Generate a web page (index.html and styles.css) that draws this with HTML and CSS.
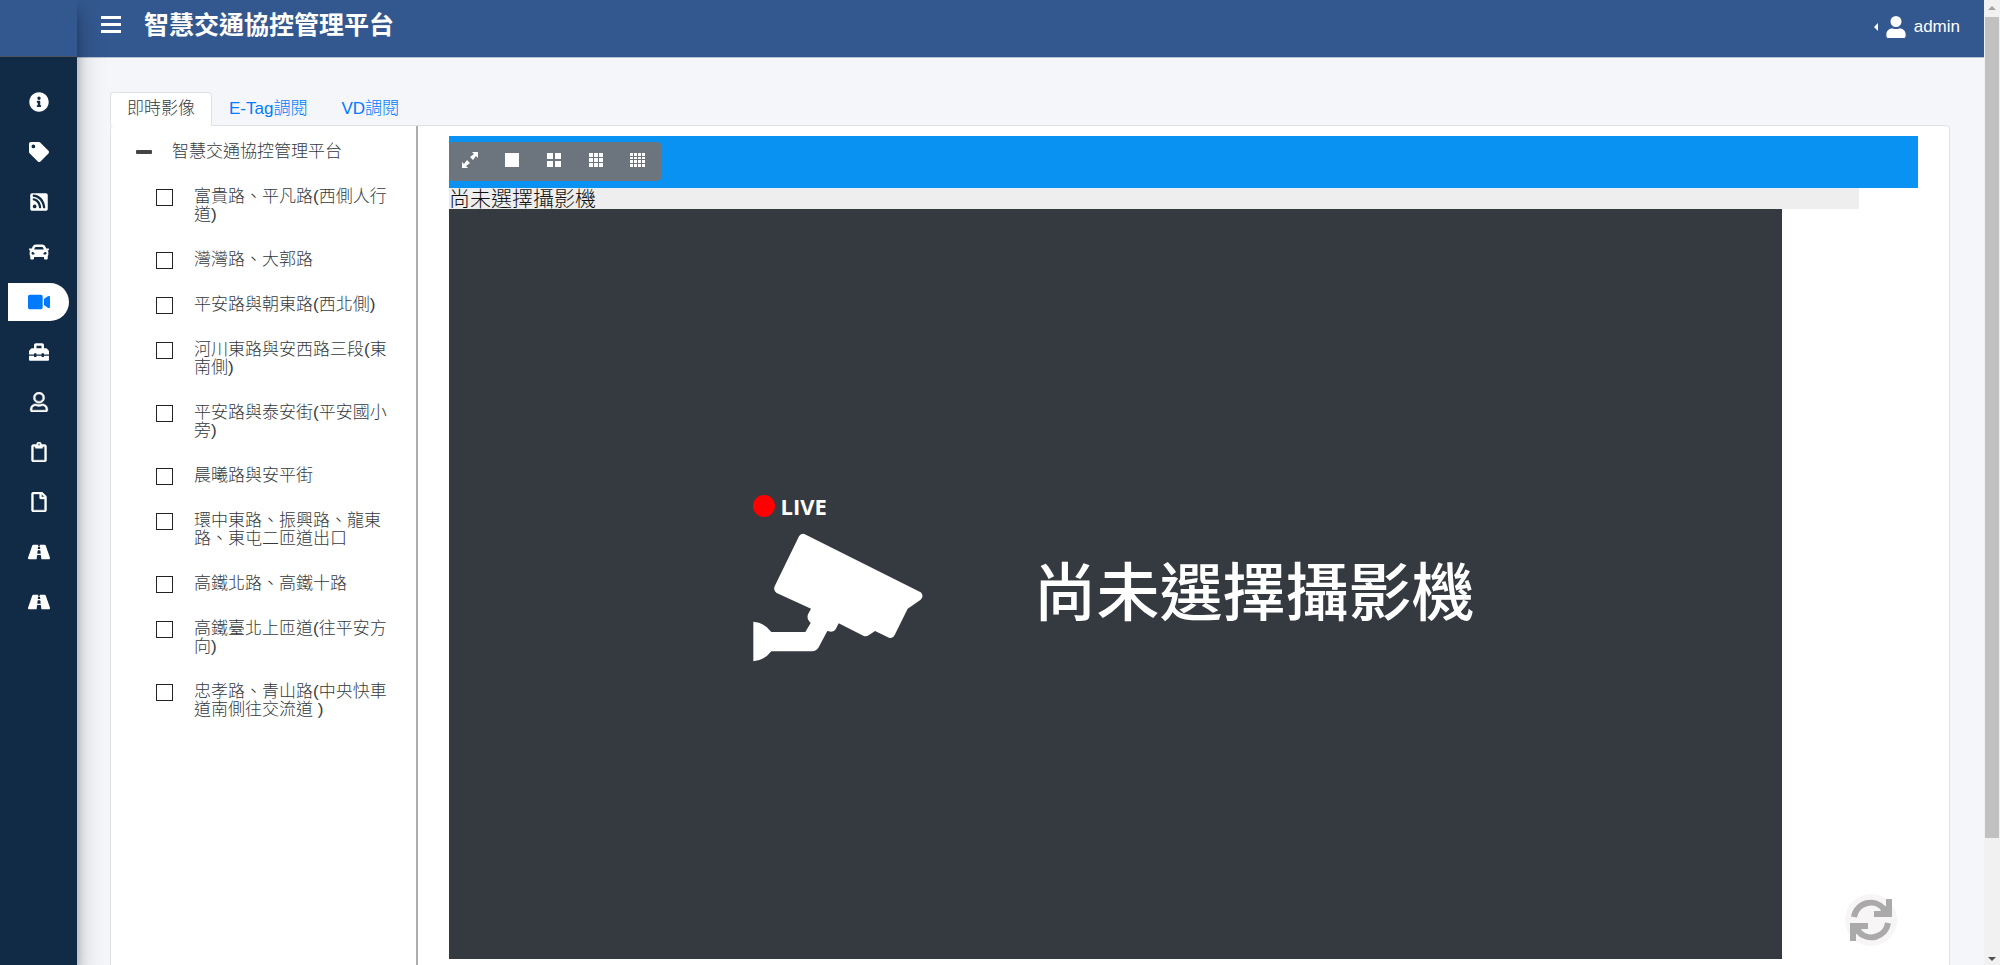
FILE: index.html
```html
<!DOCTYPE html>
<html lang="zh-Hant">

<head>
    <meta charset="UTF-8">
    <meta name="viewport" content="width=device-width, initial-scale=1">
    <title>智慧交通協控管理平台</title>
    <link rel="stylesheet" href="styles.css">
</head>

<body>

    <aside class="sidebar">
        <div class="brand"></div>
        <nav class="side-nav">
            <a href="#" aria-label="資訊"><svg class="icon" viewBox="0 0 512 512"><path d="M256 8C119 8 8 119 8 256s111 248 248 248 248-111 248-248S393 8 256 8zm0 110c23 0 42 19 42 42s-19 42-42 42-42-19-42-42 19-42 42-42zm56 254c0 7-5 12-12 12h-88c-7 0-12-5-12-12v-24c0-7 5-12 12-12h12v-64h-12c-7 0-12-5-12-12v-24c0-7 5-12 12-12h64c7 0 12 5 12 12v100h12c7 0 12 5 12 12v24z"/></svg></a>
            <a href="#" aria-label="E-Tag"><svg class="icon" viewBox="0 0 512 512"><path d="M0 252V48C0 21 21 0 48 0h204a48 48 0 0 1 34 14l212 212c19 19 19 49 0 68L294 498c-19 19-49 19-68 0L14 286a48 48 0 0 1-14-34zM112 64a48 48 0 1 0 0 96 48 48 0 0 0 0-96z"/></svg></a>
            <a href="#" aria-label="訊號"><svg class="icon" viewBox="-32 0 512 512"><path d="M400 32H48C21 32 0 53 0 80v352c0 27 21 48 48 48h352c27 0 48-21 48-48V80c0-27-21-48-48-48zM112 416a48 48 0 1 1 0-96 48 48 0 0 1 0 96zm157 0h-34a11 11 0 0 1-11-11C218 300 135 218 75 214a11 11 0 0 1-11-11v-34c0-7 6-12 12-11 110 6 198 95 204 246 1 6-4 12-11 12zm103 0h-34a11 11 0 0 1-11-11C321 248 200 122 75 120a11 11 0 0 1-11-11V76c0-7 5-12 12-12 167 6 302 141 308 340 0 7-5 12-12 12z"/></svg></a>
            <a href="#" aria-label="車輛"><svg class="icon" viewBox="0 0 512 512"><path d="M500 168h-58l-24-50c-14-33-46-54-82-54H176c-36 0-68 21-82 54l-24 50H12c-8 0-14 7-12 15l6 24c1 5 6 9 12 9h20c-14 12-22 29-22 48v48c0 16 6 31 16 42v62c0 18 14 32 32 32h32c18 0 32-14 32-32v-32h256v32c0 18 14 32 32 32h32c18 0 32-14 32-32v-62c10-11 16-26 16-42v-48c0-19-8-36-22-48h20c6 0 11-4 12-9l6-24c2-8-4-15-12-15zm-347-26c4-9 13-14 23-14h160c10 0 19 5 23 14l21 50H132zM96 320c-19 0-32-13-32-32s13-32 32-32 48 29 48 48-29 16-48 16zm320 0c-19 0-48 3-48-16s29-48 48-48 32 13 32 32-13 32-32 32z"/></svg></a>
            <a href="#" class="active" aria-label="即時影像"><svg class="icon wide" viewBox="0 0 576 512"><path d="M336 64H48C21 64 0 85 0 112v288c0 27 21 48 48 48h288c27 0 48-21 48-48V112c0-27-21-48-48-48zm190 38L416 177v158l110 75c21 15 50 0 50-25V127c0-25-29-40-50-25z"/></svg></a>
            <a href="#" aria-label="工具"><svg class="icon" viewBox="0 0 512 512"><path d="M503 215l-46-46a32 32 0 0 0-23-9h-50V80c0-26-22-48-48-48H176c-26 0-48 22-48 48v80H78a32 32 0 0 0-23 9L9 215a32 32 0 0 0-9 22v83h128v-16c0-9 7-16 16-16h32c9 0 16 7 16 16v16h128v-16c0-9 7-16 16-16h32c9 0 16 7 16 16v16h128v-83a32 32 0 0 0-9-22zM320 160H192V96h128zm64 208c0 9-7 16-16 16h-32c-9 0-16-7-16-16v-16H192v16c0 9-7 16-16 16h-32c-9 0-16-7-16-16v-16H0v96c0 18 14 32 32 32h448c18 0 32-14 32-32v-96H384z"/></svg></a>
            <a href="#" aria-label="使用者"><svg class="icon outline" viewBox="-32 0 512 512"><path d="M314 304c-29 0-43 16-90 16s-61-16-90-16C60 304 0 364 0 438v26c0 27 21 48 48 48h352c27 0 48-21 48-48v-26c0-74-60-134-134-134zm86 160H48v-26c0-48 38-86 86-86 15 0 39 16 90 16 52 0 75-16 90-16 48 0 86 38 86 86zM224 288a144 144 0 1 0 0-288 144 144 0 0 0 0 288zm0-240a96 96 0 1 1 0 192 96 96 0 0 1 0-192z"/></svg></a>
            <a href="#" aria-label="紀錄"><svg class="icon outline" viewBox="-64 0 512 512"><path d="M336 64h-80a64 64 0 0 0-128 0H48C21 64 0 85 0 112v352c0 27 21 48 48 48h288c27 0 48-21 48-48V112c0-27-21-48-48-48zM192 40a24 24 0 1 1 0 48 24 24 0 0 1 0-48zm144 424H48V112h48v36c0 7 5 12 12 12h168c7 0 12-5 12-12v-36h48z"/></svg></a>
            <a href="#" aria-label="文件"><svg class="icon outline" viewBox="-64 0 512 512"><path d="M370 98L286 14a48 48 0 0 0-34-14H48C21 0 0 22 0 48v416c0 27 21 48 48 48h288c27 0 48-21 48-48V132a48 48 0 0 0-14-34zm-38 30h-76V52zM48 464V48h160v104c0 13 11 24 24 24h104v288z"/></svg></a>
            <a href="#" aria-label="道路"><svg class="icon wide" viewBox="0 0 576 512"><path d="M573 402L464 85c-5-12-17-21-30-21H308l4 34c1 8-4 14-10 14h-28c-6 0-11-6-10-14l4-34H142c-13 0-25 9-30 21L3 402c-10 22 5 46 28 46h194l11-98c1-8 8-14 16-14h72c8 0 15 6 16 14l11 98h194c23 0 38-24 28-46zM260 136c0-4 4-8 8-8h40c4 0 8 4 9 8l4 32c1 5-3 8-8 8h-50c-5 0-9-4-8-8zm56 168h-56c-10 0-17-8-16-17l7-64c1-8 8-15 16-15h42c8 0 15 7 16 15l7 64c1 9-7 17-16 17z"/></svg></a>
            <a href="#" aria-label="路段"><svg class="icon wide" viewBox="0 0 576 512"><path d="M573 402L464 85c-5-12-17-21-30-21H308l4 34c1 8-4 14-10 14h-28c-6 0-11-6-10-14l4-34H142c-13 0-25 9-30 21L3 402c-10 22 5 46 28 46h194l11-98c1-8 8-14 16-14h72c8 0 15 6 16 14l11 98h194c23 0 38-24 28-46zM260 136c0-4 4-8 8-8h40c4 0 8 4 9 8l4 32c1 5-3 8-8 8h-50c-5 0-9-4-8-8zm56 168h-56c-10 0-17-8-16-17l7-64c1-8 8-15 16-15h42c8 0 15 7 16 15l7 64c1 9-7 17-16 17z"/></svg></a>
        </nav>
    </aside>

    <div class="page">
        <header class="topbar">
            <button class="menu" aria-label="選單"><svg viewBox="0 0 20 18"><path d="M0 0h20v3H0zM0 7h20v3H0zM0 14h20v3H0z"/></svg></button>
            <h1>智慧交通協控管理平台</h1>
            <a href="#" class="user">
                <svg class="caret" viewBox="0 0 4 8"><path d="M4 0v8L0 4z"/></svg>
                <svg class="person" viewBox="0 0 448 512"><path d="M224 256a128 128 0 1 0 0-256 128 128 0 0 0 0 256zm90 32h-17a174 174 0 0 1-146 0h-17C60 288 0 348 0 422v42c0 27 21 48 48 48h352c27 0 48-21 48-48v-42c0-74-60-134-134-134z"/></svg>
                admin
            </a>
        </header>

        <main>
            <nav class="tabs">
                <a href="#" class="tab selected">即時影像</a>
                <a href="#" class="tab">E-Tag調閱</a>
                <a href="#" class="tab">VD調閱</a>
            </nav>

            <section class="card">
                <div class="tree">
                    <div class="tree-root">
                        <button class="collapse" aria-label="收合"></button>
                        <span>智慧交通協控管理平台</span>
                    </div>
                    <label class="camera"><input type="checkbox"><span>富貴路、平凡路(西側人行道)</span></label>
                    <label class="camera"><input type="checkbox"><span>灣灣路、大郭路</span></label>
                    <label class="camera"><input type="checkbox"><span>平安路與朝東路(西北側)</span></label>
                    <label class="camera"><input type="checkbox"><span>河川東路與安西路三段(東南側)</span></label>
                    <label class="camera"><input type="checkbox"><span>平安路與泰安街(平安國小旁)</span></label>
                    <label class="camera"><input type="checkbox"><span>晨曦路與安平街</span></label>
                    <label class="camera"><input type="checkbox"><span>環中東路、振興路、龍東路、東屯二匝道出口</span></label>
                    <label class="camera"><input type="checkbox"><span>高鐵北路、高鐵十路</span></label>
                    <label class="camera"><input type="checkbox"><span>高鐵臺北上匝道(往平安方向)</span></label>
                    <label class="camera"><input type="checkbox"><span>忠孝路、青山路(中央快車道南側往交流道 )</span></label>
                </div>

                <div class="viewer">
                    <div class="toolbar">
                        <div class="layouts">
                            <button aria-label="全螢幕"><svg viewBox="0 0 16 16"><path d="M10 0h6v6l-2-2-3 4-3-3 4-3zM0 10l2 2 3-4 3 3-4 3 2 2H0z"/></svg></button>
                            <button aria-label="單一畫面"><svg viewBox="0 0 16 16"><path d="M1 1h14v14H1z"/></svg></button>
                            <button aria-label="四分割"><svg viewBox="0 0 16 16"><path d="M1 1h6v6H1zM9 1h6v6H9zM1 9h6v6H1zM9 9h6v6H9z"/></svg></button>
                            <button aria-label="九分割"><svg viewBox="0 0 16 16"><path d="M1 1h4v4H1zM6 1h4v4H6zM11 1h4v4h-4zM1 6h4v4H1zM6 6h4v4H6zM11 6h4v4h-4zM1 11h4v4H1zM6 11h4v4H6zM11 11h4v4h-4z"/></svg></button>
                            <button aria-label="十六分割"><svg viewBox="0 0 16 16"><path d="M0 1h3v3H0zM4 1h3v3H4zM8 1h3v3H8zM12 1h3v3h-3zM0 5h3v2H0zM4 5h3v2H4zM8 5h3v2H8zM12 5h3v2h-3zM0 8h3v3H0zM4 8h3v3H4zM8 8h3v3H8zM12 8h3v3h-3zM0 12h3v3H0zM4 12h3v3H4zM8 12h3v3H8zM12 12h3v3h-3z"/></svg></button>
                        </div>
                    </div>
                    <p class="camera-name">尚未選擇攝影機</p>
                    <div class="screen">
                        <div class="live">
                            <p class="live-label"><span class="dot"></span>LIVE</p>
                            <svg class="cctv" viewBox="68 160 510 387"><path d="M222 163Q211 160 206 170L133 320Q128 333 139 340L242 387L233 404Q229 416 236 424L241 430L225 457H123Q103 429 69 426V545Q104 541 123 515H245Q258 515 265 503L291 454L303 456Q312 456 316 449L325 431L399 468Q407 472 415 467L434 454L476 474Q488 478 493 466L532 387L571 360Q582 349 571 338Z"/></svg>
                        </div>
                        <p class="empty">尚未選擇攝影機</p>
                    </div>
                </div>
            </section>
        </main>
    </div>

    <div class="scrollbar">
        <svg viewBox="0 0 8 4"><path d="M4 0l4 4H0z"/></svg>
        <div class="thumb"></div>
        <svg class="down" viewBox="0 0 8 4"><path d="M0 0h8L4 4z"/></svg>
    </div>

    <button class="refresh" aria-label="重新整理"><svg viewBox="0 0 42 42"><path d="M4 18A17 17 0 0 1 34 10M38 24A17 17 0 0 1 8 32"/><path class="arrow" d="M36 0h6v18H24v-6h6l6-5zM6 42H0V24h18v6h-6l-6 5z"/></svg></button>

</body>

</html>
```
FILE: styles.css
```css
* {
    box-sizing: border-box;
}

body {
    margin: 0;
    height: 100vh;
    display: flex;
    overflow: hidden;
    background: #f4f6f9;
    font-family: "Liberation Sans", "Noto Sans CJK TC", sans-serif;
    font-size: 17px;
    font-weight: 300;
    color: #343a40;
}

h1,
p {
    margin: 0;
}

a {
    text-decoration: none;
}

button {
    padding: 0;
    border: 0;
    background: none;
    cursor: pointer;
}

svg {
    display: block;
    fill: currentColor;
}

/* sidebar */
.sidebar {
    flex: 0 0 77px;
    z-index: 2;
    background: #112a46;
    box-shadow: 0 14px 28px rgba(0, 0, 0, .25), 0 10px 10px rgba(0, 0, 0, .22);
}

.brand {
    height: 57px;
    background: #33588f;
    border-bottom: 1px solid #4b545c;
}

.side-nav {
    display: flex;
    flex-direction: column;
    gap: 12px;
    padding: 26px 8px;
}

.side-nav a {
    display: flex;
    align-items: center;
    justify-content: center;
    height: 38px;
    color: white;
    border-radius: 0 19px 19px 0;
}

.side-nav .active {
    background: white;
    color: #007bff;
}

.icon {
    width: 20px;
    height: 20px;
}

.icon.wide {
    width: 22px;
}

.icon.outline {
    stroke: currentColor;
    stroke-width: 12;
}

/* header */
.page {
    flex: 1;
    min-width: 0;
    display: flex;
    flex-direction: column;
}

.topbar {
    flex: none;
    display: flex;
    align-items: center;
    height: 58px;
    padding: 0 24px 7px;
    background: #33588f;
    border-bottom: 1px solid #b4c0d4;
    color: white;
}

.menu {
    color: white;
}

.menu svg {
    width: 20px;
    height: 18px;
}

.topbar h1 {
    margin-left: 23px;
    font-size: 25px;
    line-height: 36px;
    font-weight: 700;
}

.user {
    display: flex;
    align-items: center;
    gap: 8px;
    margin-left: auto;
    padding-top: 4px;
    color: white;
}

.caret {
    width: 4px;
    height: 8px;
}

.person {
    width: 20px;
    height: 22px;
}

/* content */
main {
    flex: 1;
    min-height: 0;
    overflow-y: auto;
    scrollbar-width: none;
    padding: 34px 34px 0 33px;
}

.tabs {
    display: flex;
}

.tab {
    padding: 0 16px;
    border: 1px solid transparent;
    border-bottom: 0;
    border-radius: 4px 4px 0 0;
    line-height: 32px;
    color: #007bff;
}

.tab.selected {
    background: white;
    border-color: #dee2e6;
    color: #343a40;
    position: relative;
    margin-bottom: -1px;
}

.card {
    display: flex;
    min-height: 1000px;
    background: white;
    border: 1px solid #dee2e6;
    border-radius: 4px;
}

.tree {
    flex: 0 0 307px;
    padding: 4px 28px 0 25px;
    border-right: 2px solid #adadad;
    line-height: 18px;
}

.tree-root {
    display: flex;
    align-items: center;
    gap: 20px;
    padding: 13px 0 14px;
    white-space: nowrap;
}

.collapse {
    width: 16px;
    height: 4px;
    border-radius: 1px;
    background: #444;
}

.camera {
    display: flex;
    gap: 21px;
    padding: 13px 0 14px 20px;
}

.camera input {
    appearance: none;
    flex: none;
    width: 17px;
    height: 17px;
    margin: 1px 0 0;
    border: 1px solid #222;
    background: white;
}

.camera input:checked {
    background: #007bff;
}

.camera span {
    flex: 1;
    margin-right: -7px;
}

.viewer {
    flex: 1;
    min-width: 0;
    padding: 10px 31px;
}

.toolbar {
    padding: 6px 0 7px;
    background: #0992f2;
}

.layouts {
    display: inline-flex;
    vertical-align: top;
    padding-right: 2px;
    background: #6c757d;
    border-radius: 4px;
}

.layouts button {
    display: flex;
    align-items: center;
    justify-content: center;
    width: 42px;
    height: 39px;
    padding-bottom: 3px;
    color: white;
}

.layouts svg {
    width: 16px;
    height: 16px;
}

.camera-name {
    width: 96%;
    background: #eee;
    font-size: 21px;
    line-height: 21px;
    color: #111;
}

.screen {
    display: flex;
    align-items: center;
    justify-content: center;
    gap: 111px;
    width: 90.75%;
    aspect-ratio: 16 / 9;
    padding: 0 4px 10px 0;
    background: #343a40;
    color: white;
}

.live-label {
    display: flex;
    align-items: center;
    gap: 6px;
    margin-bottom: 16px;
    font: 700 22px/22px "Open Sans", sans-serif;
}

.dot {
    width: 22px;
    height: 22px;
    border-radius: 50%;
    background: red;
}

.cctv {
    width: 170px;
    height: 129px;
}

.empty {
    padding-top: 18px;
    font: 500 63px/63px "Noto Sans CJK TC", sans-serif;
}

/* floating refresh button */
.refresh {
    position: fixed;
    right: 103px;
    bottom: 19px;
    z-index: 3;
    display: flex;
    align-items: center;
    justify-content: center;
    width: 52px;
    height: 52px;
    border-radius: 50%;
    background: #f7f5f5;
    color: #aaa;
}

.refresh svg {
    width: 42px;
    height: 42px;
    fill: none;
    stroke: currentColor;
    stroke-width: 6;
}

.refresh .arrow {
    fill: currentColor;
    stroke: none;
}

/* window scrollbar */
.scrollbar {
    flex: 0 0 16px;
    display: flex;
    flex-direction: column;
    align-items: center;
    padding: 6px 0 4px;
    background: #f1f1f1;
    color: #a3a3a3;
}

.scrollbar svg {
    width: 8px;
    height: 4px;
}

.thumb {
    width: 14px;
    height: 86%;
    margin-top: 7px;
    background: #c1c1c1;
}

.scrollbar .down {
    margin-top: auto;
    color: #505050;
}
```
